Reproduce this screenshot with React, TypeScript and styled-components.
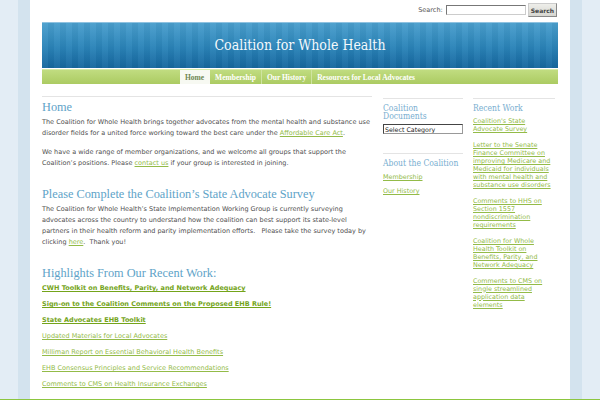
import React from 'react';
import styled, { createGlobalStyle } from 'styled-components';

const GlobalStyle = createGlobalStyle`
  html, body {
    margin: 0;
    padding: 0;
    background: #e3edf5;
  }
  body {
    font-family: 'DejaVu Sans', Verdana, sans-serif;
    color: #4a4a4a;
  }
`;

const highlights = [
  { text: 'CWH Toolkit on Benefits, Parity, and Network Adequacy', bold: true },
  { text: 'Sign-on to the Coalition Comments on the Proposed EHB Rule!', bold: true },
  { text: 'State Advocates EHB Toolkit', bold: true },
  { text: 'Updated Materials for Local Advocates', bold: false },
  { text: 'Milliman Report on Essential Behavioral Health Benefits', bold: false },
  { text: 'EHB Consensus Principles and Service Recommendations', bold: false },
  { text: 'Comments to CMS on Health Insurance Exchanges', bold: false },
];

const recentWork = [
  "Coalition's State Advocate Survey",
  'Letter to the Senate Finance Committee on improving Medicare and Medicaid for individuals with mental health and substance use disorders',
  'Comments to HHS on Section 1557 nondiscrimination requirements',
  'Coalition for Whole Health Toolkit on Benefits, Parity, and Network Adequacy',
  'Comments to CMS on single streamlined application data elements',
];

const navItems = ['Home', 'Membership', 'Our History', 'Resources for Local Advocates'];

const App = () => {
  return (
    <>
      <GlobalStyle />
      <Page>
        <SearchRow>
          <label>Search:</label>
          <SearchInput type="text" />
          <SearchButton>Search</SearchButton>
        </SearchRow>
        <Header>Coalition for Whole Health</Header>
        <Nav>
          {navItems.map((item, i) => (
            <NavItem key={item} $active={i === 0}>
              {item}
            </NavItem>
          ))}
        </Nav>
        <Content>
          <Main>
            <Heading>Home</Heading>
            <Para>
              The Coalition for Whole Health brings together advocates from the mental health and substance use
              disorder fields for a united force working toward the best care under the{' '}
              <Link href="#">Affordable Care Act</Link>.
            </Para>
            <Para>
              We have a wide range of member organizations, and we welcome all groups that support the
              Coalition&#8217;s positions. Please <Link href="#">contact us</Link> if your group is interested in
              joining.
            </Para>
            <Heading $gap>Please Complete the Coalition&#8217;s State Advocate Survey</Heading>
            <Para>
              The Coalition for Whole Health&#8217;s State Implementation Working Group is currently surveying
              advocates across the country to understand how the coalition can best support its state-level
              partners in their health reform and parity implementation efforts. &nbsp; Please take the survey today by
              clicking <Link href="#">here</Link>. &nbsp;Thank you!
            </Para>
            <Heading $gap>Highlights From Our Recent Work:</Heading>
            {highlights.map((h) => (
              <ListPara key={h.text}>
                <Link href="#" $bold={h.bold}>
                  {h.text}
                </Link>
              </ListPara>
            ))}
          </Main>
          <Sidebar $width={80}>
            <Widget>
              <WidgetTitle>Coalition Documents</WidgetTitle>
              <Select>
                <option>Select Category</option>
              </Select>
            </Widget>
            <Widget>
              <WidgetTitle>About the Coalition</WidgetTitle>
              <SideItem>
                <SideLink href="#">Membership</SideLink>
              </SideItem>
              <SideItem>
                <SideLink href="#">Our History</SideLink>
              </SideItem>
            </Widget>
          </Sidebar>
          <Sidebar $width={82}>
            <Widget>
              <WidgetTitle $gap={5}>Recent Work</WidgetTitle>
              {recentWork.map((r) => (
                <RecentItem key={r}>
                  <SideLink href="#">{r}</SideLink>
                </RecentItem>
              ))}
            </Widget>
          </Sidebar>
        </Content>
      </Page>
      <Footer />
    </>
  );
};

export default App;

const Page = styled.div`
  width: 516px;
  margin: 0 auto;
  padding: 3px 12px 4px;
  background: #ffffff;
  border-left: 12px solid #d3e3ee;
  border-right: 12px solid #d3e3ee;
`;

const SearchRow = styled.div`
  display: flex;
  justify-content: flex-end;
  align-items: center;
  height: 14px;
  gap: 2px;
  padding-right: 1px;
  font-size: 6.5px;
  color: #555;
`;

const SearchInput = styled.input`
  width: 80px;
  height: 10px;
  box-sizing: border-box;
  margin: 0 0 0 1px;
  padding: 0;
  border: 1px solid #777;
  border-right-color: #ccc;
  border-bottom-color: #ccc;
  background: #fff;
`;

const SearchButton = styled.button`
  height: 14px;
  padding: 0 2px;
  margin: 0;
  font-family: 'DejaVu Sans', Verdana, sans-serif;
  font-size: 6px;
  font-weight: bold;
  color: #444;
  background: linear-gradient(#eeeeea, #d6d6d0);
  border: 1px solid #ccc;
  border-right-color: #888;
  border-bottom-color: #888;
`;

const Header = styled.div`
  margin-top: 5px;
  height: 46px;
  display: flex;
  align-items: center;
  justify-content: center;
  padding-bottom: 2px;
  border-top: 1px solid #8fc2e0;
  box-sizing: border-box;
  background:
    repeating-linear-gradient(90deg, rgba(255, 255, 255, 0.03) 0 6px, rgba(0, 0, 0, 0.03) 6px 12px),
    linear-gradient(#4a9fcd, #2a83b8 55%, #16679e);
  color: #f4f9fc;
  font-family: 'DejaVu Serif', Georgia, serif;
  font-stretch: condensed;
  font-size: 14px;
`;

const Nav = styled.div`
  margin-top: 1px;
  height: 15px;
  display: flex;
  justify-content: center;
  background: linear-gradient(#c0dc80, #abcb62);
  border-top: 1px solid #d6eaa8;
  box-sizing: border-box;
`;

const NavItem = styled.div<{ $active?: boolean }>`
  display: flex;
  align-items: center;
  padding: 0 5px;
  font-family: 'Liberation Serif', 'Times New Roman', serif;
  font-weight: bold;
  font-size: 7.5px;
  color: ${(p) => (p.$active ? '#6f8650' : '#ffffff')};
  background: ${(p) => (p.$active ? '#f7f9f2' : 'transparent')};
  border-right: 1px solid ${(p) => (p.$active ? 'transparent' : '#cfe4a0')};

  &:last-child {
    border-right: none;
  }
`;

const Content = styled.div`
  display: flex;
  align-items: flex-start;
  margin-top: 12px;
`;

const Main = styled.div`
  width: 330px;
  margin-right: 11px;
  border-top: 1px solid #e4e4e4;
  padding-top: 3px;
`;

const Heading = styled.h2<{ $gap?: boolean }>`
  margin: ${(p) => (p.$gap ? '18px' : '0')} 0 3px;
  font-family: 'Liberation Serif', 'Times New Roman', serif;
  font-weight: normal;
  font-size: 12.3px;
  line-height: 14px;
  color: #5ea3c8;
`;

const Para = styled.p`
  margin: 0 0 8px;
  font-size: 6.5px;
  line-height: 11px;
  color: #4f4f4f;
`;

const ListPara = styled(Para)`
  margin-bottom: 5px;
`;

const Link = styled.a<{ $bold?: boolean }>`
  color: ${(p) => (p.$bold ? '#74a41a' : '#93bb48')};
  font-weight: ${(p) => (p.$bold ? 'bold' : 'normal')};
  text-decoration: underline;
`;

const Sidebar = styled.div<{ $width: number }>`
  width: ${(p) => p.$width}px;
  margin-right: 10px;
  margin-top: 2px;

  &:last-child {
    margin-right: 0;
  }
`;

const Widget = styled.div`
  border-top: 1px solid #e4e4e4;
  padding-top: 5px;
  margin-bottom: 19px;
`;

const WidgetTitle = styled.h3<{ $gap?: number }>`
  margin: 0 0 ${(p) => p.$gap ?? 4}px;
  font-family: 'DejaVu Serif', Georgia, serif;
  font-stretch: condensed;
  font-weight: normal;
  font-size: 8.5px;
  line-height: 8px;
  color: #78aed0;
`;

const Select = styled.select`
  display: block;
  width: 80px;
  height: 10px;
  padding: 0 0 0 1px;
  font-family: 'DejaVu Sans', Verdana, sans-serif;
  font-size: 6.3px;
  color: #222;
  border: 1px solid #999;
  border-top-color: #444;
  border-left-color: #444;
  background: #fff;
  appearance: none;
`;

const SideItem = styled.div`
  margin-bottom: 6px;
  font-size: 6.4px;
  line-height: 8px;

  ${WidgetTitle} + & {
    margin-top: 6px;
  }
`;

const RecentItem = styled.div`
  margin-bottom: 7.5px;
  font-size: 6.4px;
  line-height: 8.1px;
`;

const SideLink = styled.a`
  color: #93bb48;
  text-decoration: underline;
`;

const Footer = styled.div`
  height: 30px;
  background: #e3edf5;
  border-top: 3px solid #8cc63f;
`;
